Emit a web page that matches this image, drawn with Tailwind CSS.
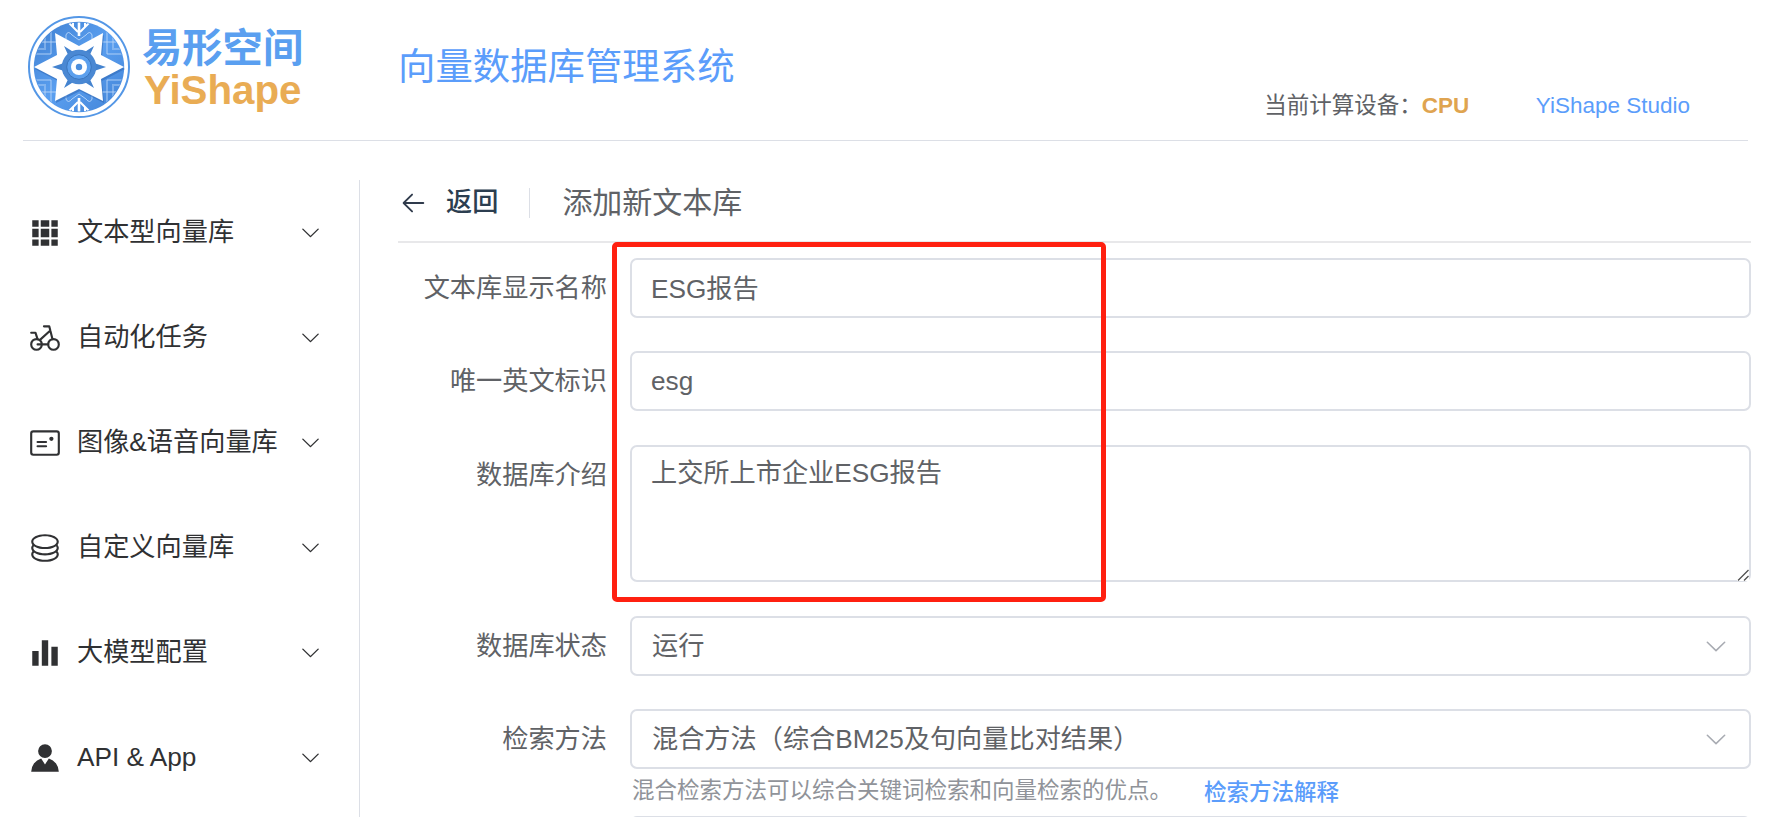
<!DOCTYPE html>
<html lang="zh-CN">
<head>
<meta charset="utf-8">
<title>向量数据库管理系统</title>
<script src="https://cdn.jsdelivr.net/npm/@tailwindcss/browser@4"></script>
</head>
<body class="relative h-[817px] w-[1768px] overflow-hidden bg-white font-['Liberation_Sans','Noto_Sans_CJK_SC',sans-serif] text-[26.2px] text-[#606266]">
<svg class="hidden">
  <symbol id="down" viewBox="0 0 1024 1024"><path fill="currentColor" d="M831.872 340.864 512 652.672 192.128 340.864a30.592 30.592 0 0 0-42.752 0 29.12 29.12 0 0 0 0 41.6L489.664 714.24a32 32 0 0 0 44.672 0l340.288-331.712a29.12 29.12 0 0 0 0-41.728 30.592 30.592 0 0 0-42.752 0z"/></symbol>
</svg>

<header class="ml-[23px] flex h-[141px] w-[1725px] border-b border-[#dcdfe6]">
  <div class="flex w-[375px] pt-[15px] pl-[4px]">
    <svg class="h-[104px] w-[104px] shrink-0" viewBox="-52 -52 104 104">
      <defs>
        <linearGradient id="disc" x1="0" y1="0" x2="1" y2="1"><stop offset="0" stop-color="#3f7fd0"/><stop offset=".5" stop-color="#5a9ff0"/><stop offset="1" stop-color="#4283d6"/></linearGradient>
        <clipPath id="inner"><circle r="44.5"/></clipPath>
      </defs>
      <circle r="50" fill="#fff" stroke="#5497e6" stroke-width="2"/>
      <circle r="45.2" fill="url(#disc)"/>
      <g clip-path="url(#inner)" fill="none" stroke="#b9d6f8" stroke-width=".9">
        <g id="quad">
          <path d="M-45-13h17v-12h-17M-45-18h12M-28-40v15h6M-34-36v17M-13-28v-4q2-5 6 0l7 5"/>
          <path d="M-11-45-1-35M-6-46v6" stroke="#fff" stroke-width="2"/>
        </g>
        <use href="#quad" transform="scale(-1 1)"/><use href="#quad" transform="scale(1 -1)"/><use href="#quad" transform="scale(-1 -1)"/>
        <path d="M0-46v15M0 31v15" stroke="#fff" stroke-width="2.6"/>
      </g>
      <path transform="translate(1 2)" fill="#2f68b5" opacity=".55" d="M0-21 24-34 22-12 45 0 22 12 24 34 0 22-24 34-22 12-45 0-22-12-24-34Z"/>
      <path fill="#fff" d="M0-21 24-34 22-12 45 0 22 12 24 34 0 22-24 34-22 12-45 0-22-12-24-34Z"/>
      <g fill="#4483cf"><path id="ray" d="M-4-14-15-21-9-8ZM4-14 15-21 9-8Z"/><use href="#ray" transform="scale(1 -1)"/><path d="M-15-4-27 0-15 4ZM15-4 27 0 15 4Z"/></g>
      <circle r="17.3" fill="#4a88d3"/>
      <circle r="12.3" fill="#5b9fed" stroke="#3974bc" stroke-width="1"/>
      <circle r="8" fill="#fff"/><circle r="3.2" fill="#4a8ddc"/>
    </svg>
    <div class="ml-[11px] pt-[10px] whitespace-nowrap">
      <div class="h-[46px] text-[40.3px] leading-[47px] font-bold text-[#5a9ff0]">易形空间</div>
      <div class="ml-[2px] h-[42px] text-[40.3px] leading-[39px] font-bold text-[#e9ac54]">YiShape</div>
    </div>
  </div>
  <h1 class="pt-[46px] text-[37.4px] leading-[42px] font-normal text-[#5b9dfb]">向量数据库管理系统</h1>
  <div class="ml-auto flex pt-[91px] pr-[58px] text-[22.5px] leading-[30px] whitespace-nowrap">
    <span>当前计算设备：</span><span class="font-bold text-[#dfa450]">CPU</span>
    <a class="ml-[66.5px] text-[#5b9dfb]">YiShape Studio</a>
  </div>
</header>

<div class="flex h-[676px] overflow-hidden pt-[39px]">
  <nav class="h-[637px] w-[360px] shrink-0 border-r border-[#dcdfe6] text-[#303133]">
    <div class="flex h-[105px] items-center pr-[37px] pl-[28px]">
      <svg class="mr-[15px] h-[34px] w-[34px]" viewBox="0 0 1024 1024" fill="currentColor"><path d="M640 384v256H384V384zm64 0h192v256H704zm-64 512H384V704h256zm64 0V704h192v192zm-64-768v192H384V128zm64 0h192v192H704zM320 384v256H128V384zm0 512H128V704h192zm0-768v192H128V128z"/></svg>
      <span>文本型向量库</span><svg class="ml-auto h-[23px] w-[23px]"><use href="#down"/></svg>
    </div>
    <div class="flex h-[105px] items-center pr-[37px] pl-[28px]">
      <svg class="mr-[15px] h-[34px] w-[34px]" viewBox="0 0 1024 1024" fill="none" stroke="currentColor" stroke-width="64" stroke-linecap="round" stroke-linejoin="round"><circle cx="256" cy="704" r="160"/><circle cx="768" cy="704" r="160"/><path d="M288 704h320M480 160h160l96 384M96 352h128l64 192M352 576l320-288"/></svg>
      <span>自动化任务</span><svg class="ml-auto h-[23px] w-[23px]"><use href="#down"/></svg>
    </div>
    <div class="flex h-[105px] items-center pr-[37px] pl-[28px]">
      <svg class="mr-[15px] h-[34px] w-[34px]" viewBox="0 0 1024 1024" fill="none" stroke="currentColor" stroke-width="64" stroke-linecap="round"><rect x="96" y="160" width="832" height="704" rx="64"/><path d="M288 480h256M288 608h256"/><circle cx="704" cy="384" r="64" fill="currentColor" stroke="none"/></svg>
      <span>图像&amp;语音向量库</span><svg class="ml-auto h-[23px] w-[23px]"><use href="#down"/></svg>
    </div>
    <div class="flex h-[105px] items-center pr-[37px] pl-[28px]">
      <svg class="mr-[15px] h-[34px] w-[34px]" viewBox="0 0 1024 1024" fill="currentColor"><path d="m161.92 580.736 29.888 58.88C171.328 659.776 160 681.728 160 704c0 82.304 155.328 160 352 160s352-77.696 352-160c0-22.272-11.392-44.16-31.808-64.32l30.464-58.432C903.936 615.808 928 657.664 928 704c0 129.728-188.544 224-416 224S96 833.728 96 704c0-46.592 24.32-88.576 65.92-123.264z"/><path d="m161.92 388.736 29.888 58.88C171.328 467.84 160 489.792 160 512c0 82.304 155.328 160 352 160s352-77.696 352-160c0-22.272-11.392-44.16-31.808-64.32l30.464-58.432C903.936 423.808 928 465.664 928 512c0 129.728-188.544 224-416 224S96 641.728 96 512c0-46.592 24.32-88.576 65.92-123.264z"/><path d="M512 544c-227.456 0-416-94.272-416-224S284.544 96 512 96s416 94.272 416 224-188.544 224-416 224m0-64c196.672 0 352-77.696 352-160S708.672 160 512 160s-352 77.696-352 160 155.328 160 352 160"/></svg>
      <span>自定义向量库</span><svg class="ml-auto h-[23px] w-[23px]"><use href="#down"/></svg>
    </div>
    <div class="flex h-[105px] items-center pr-[37px] pl-[28px]">
      <svg class="mr-[15px] h-[34px] w-[34px]" viewBox="0 0 1024 1024" fill="currentColor"><path d="M416 896V128h192v768zm-288 0V448h192v448zm576 0V320h192v576z"/></svg>
      <span>大模型配置</span><svg class="ml-auto h-[23px] w-[23px]"><use href="#down"/></svg>
    </div>
    <div class="flex h-[105px] items-center pr-[37px] pl-[28px]">
      <svg class="mr-[15px] h-[34px] w-[34px]" viewBox="0 0 1024 1024" fill="currentColor"><path d="M628.736 528.896A416 416 0 0 1 928 928H96a415.872 415.872 0 0 1 299.264-399.104L512 704zM720 304a208 208 0 1 1-416 0 208 208 0 0 1 416 0"/></svg>
      <span>API &amp; App</span><svg class="ml-auto h-[23px] w-[23px]"><use href="#down"/></svg>
    </div>
  </nav>

  <main class="ml-[38px] w-[1353px] leading-[40px]">
    <div class="flex h-[63px] items-center border-b-2 border-[#e8e8ea] pb-[16px]">
      <svg class="h-[30px] w-[30px] text-[#303b4c]" viewBox="0 0 1024 1024" fill="currentColor"><path d="M224 480h640a32 32 0 1 1 0 64H224a32 32 0 0 1 0-64"/><path d="m237.248 512 265.408 265.344a32 32 0 0 1-45.312 45.312l-288-288a32 32 0 0 1 0-45.312l288-288a32 32 0 1 1 45.312 45.312z"/></svg>
      <span class="ml-[18px] pb-[2px] font-medium text-[#2c3e50]">返回</span>
      <span class="ml-[31px] h-[30px] w-px bg-[#dcdfe6]"></span>
      <h2 class="ml-[32px] pt-px text-[30px] font-normal">添加新文本库</h2>
    </div>

    <form class="pt-[15px]">
      <div class="mb-[33px] flex">
        <label class="mr-[23px] w-[209px] pt-[10px] text-right">文本库显示名称</label>
        <div class="flex h-[60px] w-[1121px] items-center rounded-[7px] border-2 border-[#dcdfe6] px-[19px] pt-[2px]">ESG报告</div>
      </div>
      <div class="mb-[34px] flex">
        <label class="mr-[23px] w-[209px] pt-[10px] text-right">唯一英文标识</label>
        <div class="flex h-[60px] w-[1121px] items-center rounded-[7px] border-2 border-[#dcdfe6] px-[19px]">esg</div>
      </div>
      <div class="mb-[34px] flex">
        <label class="mr-[23px] w-[209px] pt-[10px] text-right">数据库介绍</label>
        <div class="relative h-[137px] w-[1121px] rounded-[7px] border-2 border-[#dcdfe6] px-[19px] pt-[6px]">上交所上市企业ESG报告
          <svg class="absolute right-0 -bottom-[1px] h-[12px] w-[12px] bg-white" viewBox="0 0 12 12" stroke="#505050" stroke-width="1.3" fill="none"><path d="M1 11.5 11.5 1M7 11.5 11.5 7"/></svg>
        </div>
      </div>
      <div class="mb-[33px] flex">
        <label class="mr-[23px] w-[209px] pt-[10px] text-right">数据库状态</label>
        <div class="flex h-[60px] w-[1121px] items-center justify-between rounded-[7px] border-2 border-[#dcdfe6] pr-[20px] pl-[20px]"><span>运行</span><svg class="h-[26px] w-[26px] text-[#a8abb2]"><use href="#down"/></svg></div>
      </div>
      <div class="flex">
        <label class="mr-[23px] w-[209px] pt-[10px] text-right">检索方法</label>
        <div class="w-[1121px]">
          <div class="flex h-[60px] items-center justify-between rounded-[7px] border-2 border-[#dcdfe6] pr-[20px] pl-[20px]"><span>混合方法（综合BM25及句向量比对结果）</span><svg class="h-[26px] w-[26px] text-[#a8abb2]"><use href="#down"/></svg></div>
          <div class="flex h-[47px] pt-[2px] pl-[2px] text-[22.5px] text-[#909399]"><span>混合检索方法可以综合关键词检索和向量检索的优点。</span><a class="ml-[32px] pt-[2px] font-medium text-[#5b9dfb]">检索方法解释</a></div>
          <div class="h-[60px] rounded-[7px] border-2 border-[#dcdfe6]"></div>
        </div>
      </div>
    </form>
  </main>
</div>

<div class="absolute top-[242px] left-[612px] h-[360px] w-[494px] rounded-[5px] border-5 border-[#ff2010]"></div>
</body>
</html>
